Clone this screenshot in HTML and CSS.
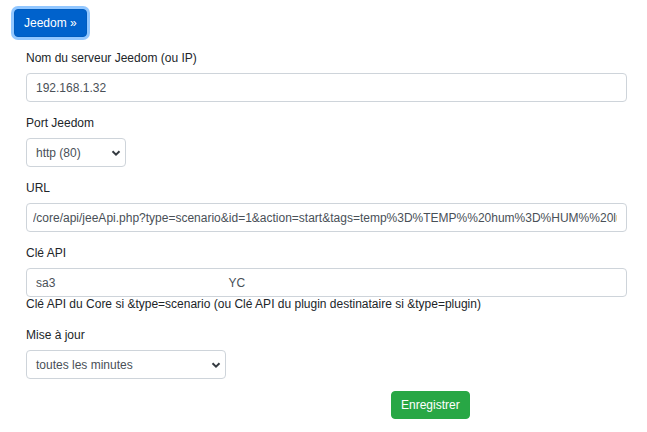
FILE: index.html
```html
<!DOCTYPE html>
<html lang="fr">
<head>
<meta charset="utf-8">
<title>Jeedom</title>
<link rel="stylesheet" href="styles.css">
</head>
<body>
<div class="page">
  <div class="top">
    <button class="btn btn-primary active" type="button">Jeedom »</button>
  </div>
  <form class="form">
    <div class="group">
      <label class="label">Nom du serveur Jeedom (ou IP)</label>
      <input class="control" type="text" value="192.168.1.32">
    </div>
    <div class="group">
      <label class="label">Port Jeedom</label>
      <div class="select select-sm"><span>http (80)</span><svg class="chev" viewBox="0 0 10 8" width="10" height="8"><path d="M1.5 2.2 L5 5.6 L8.5 2.2" fill="none" stroke="#343a40" stroke-width="2"/></svg></div>
    </div>
    <div class="group">
      <label class="label">URL</label>
      <input class="control url" type="text" value="/core/api/jeeApi.php?type=scenario&amp;id=1&amp;action=start&amp;tags=temp%3D%TEMP%%20hum%3D%HUM%%20lum">
    </div>
    <div class="group group-help">
      <label class="label">Clé API</label>
      <input class="control" type="text" value="sa3                                                    YC">
      <div class="help">Clé API du Core si &amp;type=scenario (ou Clé API du plugin destinataire si &amp;type=plugin)</div>
    </div>
    <div class="group">
      <label class="label">Mise à jour</label>
      <div class="select select-md"><span>toutes les minutes</span><svg class="chev" viewBox="0 0 10 8" width="10" height="8"><path d="M1.5 2.2 L5 5.6 L8.5 2.2" fill="none" stroke="#343a40" stroke-width="2"/></svg></div>
    </div>
    <div class="actions">
      <button class="btn btn-success" type="button">Enregistrer</button>
    </div>
  </form>
</div>
</body>
</html>
```

FILE: styles.css
```css
* { box-sizing: border-box; }
html, body { margin: 0; padding: 0; background: #fff; }
body {
  font-family: "Liberation Sans", Arial, sans-serif;
  font-size: 12px;
  line-height: 18px;
  color: #212529;
}
.page {
  padding: 9px 20px 0 14px;
}
.top {
  display: flex;
}
.btn {
  font-family: inherit;
  font-size: 12px;
  line-height: 18px;
  height: 28px;
  padding: 0 9px;
  border-radius: 4px;
  border: 1px solid transparent;
  color: #fff;
  white-space: nowrap;
  cursor: pointer;
}
.btn-primary {
  background: #0062cc;
  border-color: #005cbf;
  min-width: 72px;
  box-shadow: 0 0 0 3px rgba(38, 143, 255, 0.5);
}
.btn-success {
  background: #28a745;
  border-color: #28a745;
  min-width: 78px;
}
.form {
  margin-left: 12px;
  margin-top: 12px;
  display: flex;
  flex-direction: column;
}
.group {
  display: flex;
  flex-direction: column;
  margin-bottom: 12px;
}
.group-help { margin-bottom: 15px; }
.label {
  display: block;
  margin-bottom: 6px;
  color: #212529;
}
.control {
  display: block;
  width: 100%;
  height: 29px;
  padding: 0 9px;
  font-family: inherit;
  font-size: 12px;
  color: #495057;
  background: #fff;
  border: 1px solid #ced4da;
  border-radius: 4px;
  outline: none;
}
.url { padding-left: 6px; }
.help {
  line-height: 14px;
  color: #212529;
}
.select {
  display: flex;
  align-items: center;
  justify-content: space-between;
  height: 29px;
  padding: 0 4px 0 9px;
  color: #495057;
  border: 1px solid #ced4da;
  border-radius: 4px;
  background: #fff;
}
.select-sm { width: 100px; }
.select-md { width: 200px; }
.chev { display: block; }
.actions {
  display: flex;
  padding-left: 365px;
}
```
